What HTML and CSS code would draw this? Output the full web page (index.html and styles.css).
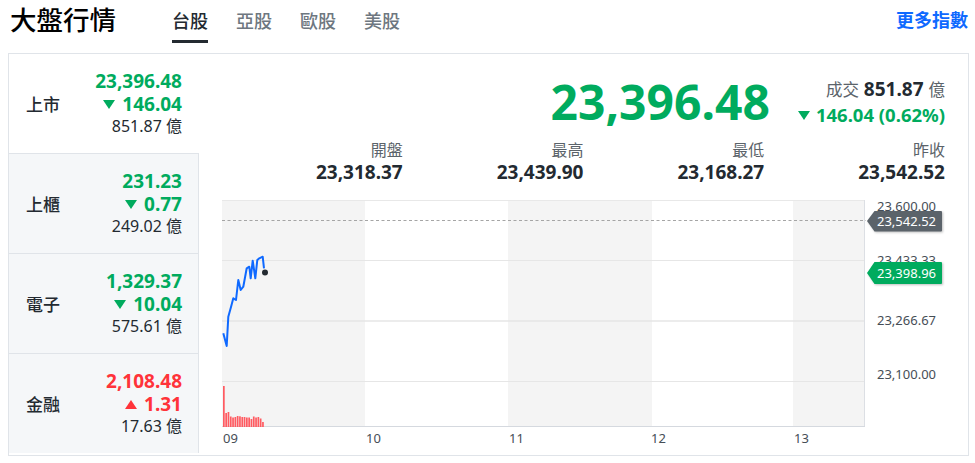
FILE: index.html
```html
<!DOCTYPE html>
<html lang="zh-Hant">
<head>
<meta charset="utf-8">
<title>大盤行情</title>
<link rel="stylesheet" href="styles.css">
</head>
<body>
<header class="header">
  <h1 class="title">大盤行情</h1>
  <nav class="tabs">
    <a class="tab active">台股</a>
    <a class="tab">亞股</a>
    <a class="tab">歐股</a>
    <a class="tab">美股</a>
  </nav>
  <a class="more">更多指數</a>
</header>
<section class="board">
  <ul class="markets">
    <li class="market selected">
      <span class="m-name">上市</span>
      <div class="m-vals">
        <div class="m-price down">23,396.48</div>
        <div class="m-change down"><i class="tri tri-down"></i>146.04</div>
        <div class="m-vol">851.87 億</div>
      </div>
    </li>
    <li class="market">
      <span class="m-name">上櫃</span>
      <div class="m-vals">
        <div class="m-price down">231.23</div>
        <div class="m-change down"><i class="tri tri-down"></i>0.77</div>
        <div class="m-vol">249.02 億</div>
      </div>
    </li>
    <li class="market">
      <span class="m-name">電子</span>
      <div class="m-vals">
        <div class="m-price down">1,329.37</div>
        <div class="m-change down"><i class="tri tri-down"></i>10.04</div>
        <div class="m-vol">575.61 億</div>
      </div>
    </li>
    <li class="market">
      <span class="m-name">金融</span>
      <div class="m-vals">
        <div class="m-price up">2,108.48</div>
        <div class="m-change up"><i class="tri tri-up"></i>1.31</div>
        <div class="m-vol">17.63 億</div>
      </div>
    </li>
  </ul>
  <div class="detail">
    <div class="quote">
      <div class="big-price">23,396.48</div>
      <div class="quote-info">
        <div class="turnover"><span class="lbl">成交</span> <b>851.87</b> <span class="lbl">億</span></div>
        <div class="q-change"><i class="tri tri-down tri-lg"></i>146.04 (0.62%)</div>
      </div>
    </div>
    <div class="stats">
      <div class="stat"><div class="s-lbl">開盤</div><div class="s-val">23,318.37</div></div>
      <div class="stat"><div class="s-lbl">最高</div><div class="s-val">23,439.90</div></div>
      <div class="stat"><div class="s-lbl">最低</div><div class="s-val">23,168.27</div></div>
      <div class="stat"><div class="s-lbl">昨收</div><div class="s-val">23,542.52</div></div>
    </div>
    <div class="chart">
      <svg class="chart-svg" width="723" height="258" viewBox="222 195 723 258" xmlns="http://www.w3.org/2000/svg">
        <rect x="222" y="200" width="143" height="227" fill="#f4f4f4"/>
        <rect x="508" y="200" width="144" height="227" fill="#f4f4f4"/>
        <rect x="793" y="200" width="71" height="227" fill="#f4f4f4"/>
        <line x1="222" y1="200.5" x2="864" y2="200.5" stroke="#e8e8e8"/>
        <line x1="222" y1="260.5" x2="864" y2="260.5" stroke="#e6e6e6"/>
        <line x1="222" y1="321" x2="864" y2="321" stroke="#e6e6e6" stroke-width="1.5"/>
        <line x1="222" y1="381.5" x2="864" y2="381.5" stroke="#e6e6e6"/>
        <line x1="864.5" y1="200" x2="864.5" y2="427" stroke="#dcdfe4"/>
        <line x1="222" y1="426.5" x2="865" y2="426.5" stroke="#d5d9df"/>
        <line x1="222" y1="220.5" x2="866" y2="220.5" stroke="#a5a5a5" stroke-dasharray="3 2.5"/>
        <g fill="#ff5b61">
          <rect x="223" y="386" width="1.7" height="41"/>
          <rect x="225.3" y="413" width="1.7" height="14"/>
          <rect x="227.6" y="412" width="1.7" height="15"/>
          <rect x="229.9" y="416.5" width="1.7" height="10.5"/>
          <rect x="232.2" y="417.5" width="1.7" height="9.5"/>
          <rect x="234.5" y="417" width="1.7" height="10"/>
          <rect x="236.8" y="416" width="1.7" height="11"/>
          <rect x="239.1" y="416.3" width="1.7" height="10.7"/>
          <rect x="241.4" y="417" width="1.7" height="10"/>
          <rect x="243.7" y="417" width="1.7" height="10"/>
          <rect x="246" y="417.5" width="1.7" height="9.5"/>
          <rect x="248.3" y="417.5" width="1.7" height="9.5"/>
          <rect x="250.6" y="419" width="1.7" height="8"/>
          <rect x="252.9" y="416.5" width="1.7" height="10.5"/>
          <rect x="255.2" y="417.5" width="1.7" height="9.5"/>
          <rect x="257.5" y="417" width="1.7" height="10"/>
          <rect x="259.8" y="418.5" width="1.7" height="8.5"/>
          <rect x="262.1" y="422" width="1.7" height="5"/>
        </g>
        <path d="M223.3,333.3 L226.7,346 L228.3,316.7 L231,307 L233.3,298.3 L236,300 L238.3,280 L240.7,290 L243.3,286.7 L246.7,268.3 L249.3,266.7 L250.7,278.3 L252.7,260.7 L255.3,278.3 L257.3,260 L259.3,258.3 L262.7,256.7 L264,268.3" fill="none" stroke="#0f69ff" stroke-width="2" stroke-linejoin="round"/>
        <circle cx="265" cy="272.5" r="3" fill="#232a31"/>
        <g class="axis-y">
          <text x="877" y="211">23,600.00</text>
          <text x="877" y="265.3">23,433.33</text>
          <text x="877" y="325.3">23,266.67</text>
          <text x="877" y="379">23,100.00</text>
        </g>
        <g class="tag-shadow">
          <path d="M867,221 L874.5,211 L941,211 Q942,211 942,212 L942,230.5 Q942,231.5 941,231.5 L874.5,231.5 Z" fill="#5b636a"/>
          <path d="M867,273 L874.5,262 L941,262 Q942,262 942,263 L942,283 Q942,284 941,284 L874.5,284 Z" fill="#00ab5e"/>
        </g>
        <g class="tag-text">
          <text x="877" y="225.6">23,542.52</text>
          <text x="877" y="277.6">23,398.96</text>
        </g>
        <g class="axis-x">
          <text x="223" y="442.6">09</text>
          <text x="366" y="442.6">10</text>
          <text x="509" y="442.6">11</text>
          <text x="651" y="442.6">12</text>
          <text x="794" y="442.6">13</text>
        </g>
      </svg>
    </div>
  </div>
</section>
</body>
</html>
```
FILE: styles.css
```css
* { box-sizing: border-box; }
body {
  margin: 0;
  font-family: "Noto Sans", "Noto Sans CJK TC", sans-serif;
  color: #232a31;
  background: #fff;
}
.header {
  display: flex;
  align-items: flex-start;
  height: 43px;
  padding: 0 7px 0 10px;
  margin-bottom: 10px;
}
.title {
  margin: 0;
  font-size: 26.5px;
  font-weight: 500;
  line-height: 40px;
  color: #000;
}
.tabs {
  display: flex;
  margin-left: 56px;
  gap: 28px;
}
.tab {
  display: flex;
  align-items: center;
  height: 43px;
  font-size: 18px;
  font-weight: 500;
  color: #6e7780;
  border-bottom: 3px solid transparent;
}
.tab.active {
  color: #232a31;
  border-bottom-color: #232a31;
}
.more {
  margin-left: auto;
  font-size: 18px;
  font-weight: 700;
  line-height: 40px;
  color: #0f69ff;
}
.board {
  display: flex;
  margin-left: 8px;
  width: 961px;
  height: 403px;
  border: 1px solid #e0e4e9;
}
.markets {
  list-style: none;
  margin: 0;
  padding: 0;
  width: 190px;
  display: flex;
  flex-direction: column;
}
.market {
  display: flex;
  align-items: center;
  justify-content: space-between;
  height: 100px;
  padding: 0 16px 0 17px;
  background: #f5f7f9;
  border-right: 1px solid #e0e4e9;
  border-top: 1px solid #e0e4e9;
}
.market.selected {
  height: 99px;
  background: #fff;
  border-top: 0;
  border-right-color: #fff;
}
.m-name {
  font-size: 17px;
  font-weight: 500;
}
.m-vals {
  text-align: right;
  line-height: 22.5px;
  padding-top: 1px;
}
.m-price, .m-change {
  font-size: 19px;
  font-weight: 700;
}
.m-vol {
  font-size: 16px;
}
.down { color: #00ab5e; }
.up { color: #ff333a; }
.tri {
  display: inline-block;
  width: 0;
  height: 0;
  border-left: 6px solid transparent;
  border-right: 6px solid transparent;
  margin-right: 7px;
  vertical-align: 2px;
}
.tri-down { border-top: 9px solid #00ab5e; }
.tri-up { border-bottom: 9px solid #ff333a; }
.tri-lg {
  border-left-width: 6.5px;
  border-right-width: 6.5px;
  margin-right: 6px;
}
.detail {
  flex: 1;
  padding: 20px 23px 0 23px;
  display: flex;
  flex-direction: column;
}
.quote {
  display: flex;
  justify-content: flex-end;
  align-items: center;
  gap: 28px;
  height: 56px;
}
.big-price {
  font-size: 48px;
  font-weight: 700;
  line-height: 56px;
  color: #00ab5e;
}
.quote-info {
  text-align: right;
  line-height: 25px;
}
.turnover {
  font-size: 19px;
}
.turnover .lbl {
  font-size: 16.5px;
  color: #5b636a;
}
.turnover b { font-weight: 700; color: #232a31; }
.q-change {
  font-size: 18.5px;
  font-weight: 700;
  color: #00ab5e;
}
.stats {
  display: grid;
  grid-template-columns: repeat(4, 1fr);
  margin-top: 9px;
  text-align: right;
  line-height: 22px;
}
.s-lbl {
  font-size: 16px;
  color: #5b636a;
}
.s-val {
  font-size: 19px;
  font-weight: 700;
}
.chart {
  margin-top: 12px;
}
.chart-svg {
  display: block;
  overflow: visible;
}
.axis-y text, .axis-x text {
  font-family: "Noto Sans", sans-serif;
  font-size: 13px;
  fill: #464e56;
}
.tag-text text {
  font-family: "Noto Sans", sans-serif;
  font-size: 13px;
  fill: #fff;
}
.tag-shadow {
  filter: drop-shadow(1px 1px 1px rgba(0, 0, 0, 0.25));
}
```
